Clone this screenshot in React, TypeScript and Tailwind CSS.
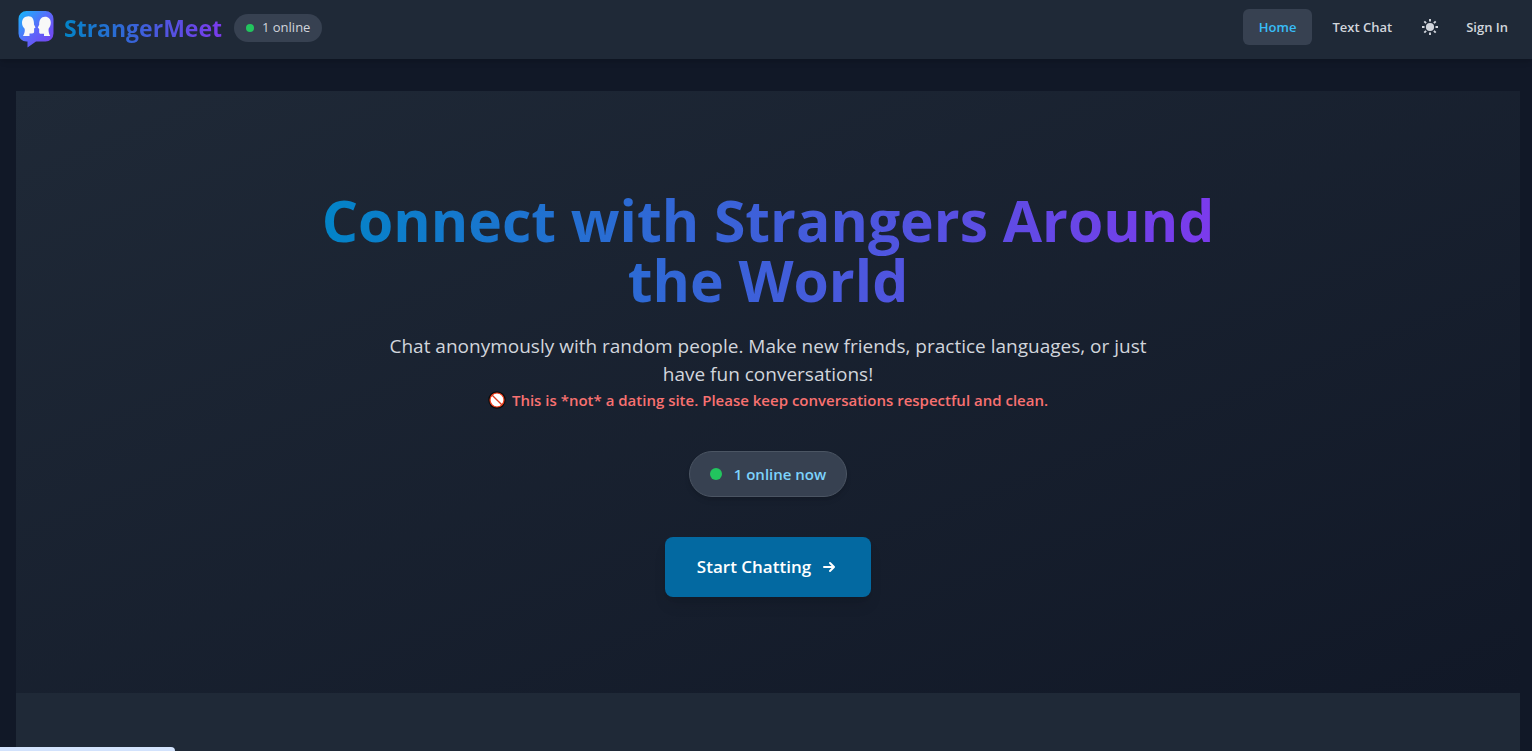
const NAV_LINK = "flex h-9 items-center rounded-md px-4 pt-px text-[13px] font-semibold";

function Logo() {
  return (
    <svg viewBox="0 0 40 40" className="size-10" aria-hidden="true">
      <defs>
        <linearGradient id="bubble" x1="0" y1="0" x2="1" y2="1">
          <stop offset="0" stopColor="#12bafb" />
          <stop offset="0.5" stopColor="#5b67fa" />
          <stop offset="1" stopColor="#7c3aed" />
        </linearGradient>
      </defs>
      <path
        fill="url(#bubble)"
        d="M10.500 3H29.500A8 8 0 0 1 37.500 11V25.500A8 8 0 0 1 29.500 33.500H20L11.500 39.500V33.500H10.500A8 8 0 0 1 2.500 25.500V11A8 8 0 0 1 10.500 3Z"
      />
      <path
        fill="#f8f8f8"
        d="M12.500 8.200C8.500 8.200 6 11 6 14.700C6 17.500 7.300 19.300 8.500 20.500C9.300 22.300 8.500 25.500 7 28H13.500V25.500H16C17.500 25.500 18.200 24.800 18.100 23.500V20.500L19.500 19.500L18 16.500C18.200 11.500 16.500 8.200 12.500 8.200Z"
      />
      <path
        fill="#f8f8f8"
        d="M29 8.800C32.700 8.800 34.800 11.300 34.800 14.800C34.800 17.500 33.700 19.300 32.600 20.700C32.300 23.300 33 26 34.200 28H28V25.800H25C23.500 25.800 23.100 25 23.200 23.700V21L21.800 19.600L23.200 16.800C23 12 25.200 8.800 29 8.800Z"
      />
    </svg>
  );
}

function SunIcon() {
  return (
    <svg viewBox="0 0 16 16" className="size-4" aria-hidden="true">
      <circle cx="8" cy="8" r="4.100" fill="currentColor" />
      <path
        d="M8 0V2.500M8 13.500V16M0 8H2.500M13.500 8H16M2.300 2.300L4.100 4.100M11.900 11.900L13.700 13.700M2.300 13.700L4.100 11.900M11.900 4.100L13.700 2.300"
        stroke="currentColor"
        strokeWidth="1.900"
      />
    </svg>
  );
}

function ProhibitedIcon() {
  return (
    <svg viewBox="0 0 18 18" className="size-[18px]" aria-hidden="true">
      <circle cx="9" cy="9" r="8.700" fill="#0b0b0b" />
      <circle cx="9" cy="9" r="7" fill="#fff" stroke="#f03a17" strokeWidth="1.200" />
      <path d="M4.200 4.200L13.800 13.800" stroke="#d8391c" strokeWidth="1.300" />
    </svg>
  );
}

function Header() {
  return (
    <header className="flex h-[59px] items-start justify-between bg-[#1f2937] pt-2 pr-2 pl-4 shadow-md">
      <div className="flex items-center gap-3">
        <a href="#" className="flex items-center gap-2">
          <Logo />
          <span className="bg-linear-to-r/srgb from-[#0284c7] to-[#7c3aed] bg-clip-text text-[23px] leading-8 font-bold text-transparent">
            StrangerMeet
          </span>
        </a>
        <span className="flex h-7 items-center gap-2 rounded-full bg-[#374151] px-3 text-[13px] text-gray-300">
          <span className="size-2 rounded-full bg-[#22c55e]" />
          1 online
        </span>
      </div>
      <nav className="flex items-center gap-1 pt-px">
        <a href="#" className={`${NAV_LINK} bg-[#374151] text-[#38bdf8]`}>
          Home
        </a>
        <a href="#" className={`${NAV_LINK} text-gray-300`}>
          Text Chat
        </a>
        <button
          type="button"
          aria-label="Toggle theme"
          className="rounded-md py-2.5 pr-2 pl-2.5 text-gray-300"
        >
          <SunIcon />
        </button>
        <a href="#" className={`${NAV_LINK} text-gray-300`}>
          Sign In
        </a>
      </nav>
    </header>
  );
}

function Hero() {
  return (
    <section className="flex flex-col items-center bg-linear-to-br/srgb from-[#1f2937] to-[#111827] px-4 pt-[99px] pb-24 text-center">
      <h1 className="mb-[22px] max-w-4xl bg-linear-to-r/srgb from-[#0284c7] to-[#7c3aed] bg-clip-text text-[57px] leading-[60px] font-bold text-transparent">
        Connect with Strangers Around the World
      </h1>
      <p className="max-w-3xl text-[19px] leading-7 text-gray-300">
        Chat anonymously with random people. Make new friends, practice languages, or just have fun
        conversations!
      </p>
      <p className="flex items-center gap-1.5 text-[15px] leading-6 font-semibold text-[#f87171]">
        <ProhibitedIcon />
        This is *not* a dating site. Please keep conversations respectful and clean.
      </p>
      <div className="mt-[39px] flex h-[46px] items-center gap-3 rounded-full border border-[#4b5563] bg-[#374151] px-5 text-[15px] font-semibold text-[#7dd3fc] shadow-md">
        <span className="size-3 rounded-full bg-[#22c55e]" />
        1 online now
      </div>
      <button
        type="button"
        className="mt-10 flex h-[60px] items-center gap-2 rounded-lg bg-[#0369a1] px-8 text-[17px] font-semibold text-white shadow-lg"
      >
        Start Chatting
        <svg viewBox="0 0 20 20" className="size-5" fill="currentColor" aria-hidden="true">
          <path
            fillRule="evenodd"
            d="M10.293 5.293a1 1 0 011.414 0l4 4a1 1 0 010 1.414l-4 4a1 1 0 01-1.414-1.414L12.586 11H5a1 1 0 110-2h7.586l-2.293-2.293a1 1 0 010-1.414z"
            clipRule="evenodd"
          />
        </svg>
      </button>
    </section>
  );
}

export default function App() {
  return (
    <div className="relative flex h-screen flex-col overflow-hidden bg-[#111827] font-['Open_Sans','Noto_Sans',sans-serif]">
      <Header />
      <main className="flex grow flex-col pt-8 pr-3 pl-4">
        <Hero />
        <section className="grow bg-[#1f2937]" />
      </main>
      <div className="absolute bottom-0 left-0 h-1 w-[175px] rounded-tr-sm bg-[#d3e3fd]" />
    </div>
  );
}
